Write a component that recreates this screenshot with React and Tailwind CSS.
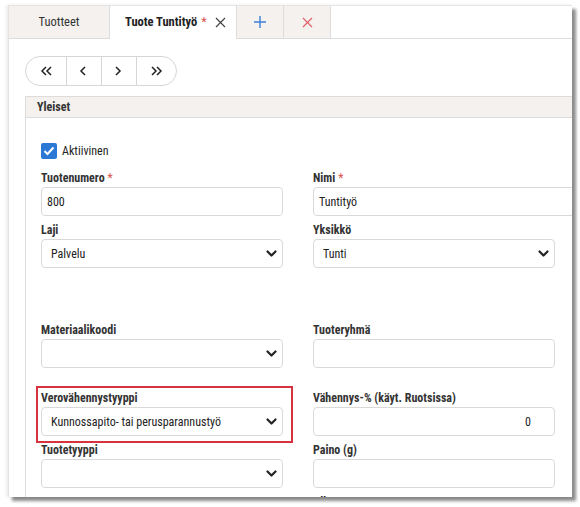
import React from "react";

const F = { fontFamily: '"Liberation Sans Narrow", "Roboto Condensed", Roboto, sans-serif' };

function Chevron() {
  return (
    <svg width="11" height="8" viewBox="0 0 11 8" className="shrink-0">
      <path d="M1.5 1.5 L5.5 5.5 L9.5 1.5" fill="none" stroke="#222" strokeWidth="2.2" strokeLinecap="round" strokeLinejoin="round" />
    </svg>
  );
}

function Label({ children, req }) {
  return (
    <div className="h-[17px] text-[12px] leading-[17px] font-bold text-[#333]">
      {children}
      {req && <span className="text-[#d9534f] ml-[3px] font-normal">*</span>}
    </div>
  );
}

function Input({ value, right, wide }) {
  return (
    <div className={`${wide ? "w-[272px]" : "w-[242px]"} h-[29px] border border-[#d9d9d9] rounded-[4px] bg-white flex items-center px-[5px] text-[12px] text-[#222] ${right ? "justify-end pr-[23px]" : ""}`}>
      {value}
    </div>
  );
}

function Select({ value }) {
  return (
    <div className="w-[242px] h-[29px] border border-[#d9d9d9] rounded-[4px] bg-white flex items-center justify-between pl-[9px] pr-[5px] text-[12px] text-[#222]">
      <span>{value}</span>
      <Chevron />
    </div>
  );
}

function Field({ label, req, children }) {
  return (
    <div className="flex flex-col">
      <Label req={req}>{label}</Label>
      {children}
    </div>
  );
}

export default function App() {
  return (
    <div className="w-[580px] h-[507px] bg-white pt-[5px] pl-[8px]" style={F}>
      <div className="w-[564px] h-[492px] overflow-hidden bg-white border-l border-t border-[#e4e4e4] shadow-[-2px_0_3px_rgba(0,0,0,0.08),4px_4px_3px_rgba(0,0,0,0.45)]">
        {/* Tab bar */}
        <div className="flex h-[33px]">
          <div className="w-[100px] bg-[#f4f1ee] border-b border-[#dcdcdc] flex items-center justify-center text-[12.5px] text-[#333]">
            Tuotteet
          </div>
          <div className="w-[128px] bg-white border-x border-[#dcdcdc] flex items-center pl-[15px] text-[12.5px] text-[#222]">
            <span className="font-bold">Tuote Tuntityö</span>
            <span className="text-[#d9534f] ml-[4px]">*</span>
            <svg width="11" height="11" viewBox="0 0 11 11" className="ml-[8px]">
              <path d="M1 1 L10 10 M10 1 L1 10" stroke="#444" strokeWidth="1.2" />
            </svg>
          </div>
          <div className="w-[47px] bg-[#f4f1ee] border-b border-r border-[#dcdcdc] flex items-center justify-center">
            <svg width="14" height="14" viewBox="0 0 14 14">
              <path d="M7 1 V13 M1 7 H13" stroke="#3d7fd6" strokeWidth="1.4" />
            </svg>
          </div>
          <div className="w-[47px] bg-[#f4f1ee] border-b border-r border-[#dcdcdc] flex items-center justify-center">
            <svg width="11" height="11" viewBox="0 0 11 11">
              <path d="M1 1 L10 10 M10 1 L1 10" stroke="#e0606a" strokeWidth="1.2" />
            </svg>
          </div>
          <div className="flex-1 border-b border-[#dcdcdc]" />
        </div>

        {/* Body */}
        <div className="pl-[16px]">
          <div className="mt-[17px] flex w-[152px] h-[30px] border border-[#d6d6d6] rounded-full text-[#222]">
            {[
              { w: "w-[41px]", d: "M8 3 L4 7 L8 11 M13 3 L9 7 L13 11" },
              { w: "w-[35px] border-l border-[#d6d6d6]", d: "M9 3 L5 7 L9 11" },
              { w: "w-[35px] border-l border-[#d6d6d6]", d: "M5 3 L9 7 L5 11" },
              { w: "w-[41px] border-l border-[#d6d6d6]", d: "M4 3 L8 7 L4 11 M9 3 L13 7 L9 11" },
            ].map((b, i) => (
              <div key={i} className={`${b.w} flex items-center justify-center`}>
                <svg width="16" height="14" viewBox="0 0 16 14">
                  <path d={b.d} fill="none" stroke="#222" strokeWidth="1.5" />
                </svg>
              </div>
            ))}
          </div>

          {/* Panel */}
          <div className="mt-[10px] border-l border-[#dcdcdc] h-[500px]">
            <div className="h-[22px] bg-[#f4f1ee] border-y border-[#dcdcdc] flex items-center pl-[11px] text-[12px] font-bold text-[#333]">
              Yleiset
            </div>
            <div className="pl-[15px]">
              <div className="mt-[24px] flex items-center h-[17px]">
                <div className="w-[16px] h-[16px] rounded-[2px] bg-[#2b79d4] flex items-center justify-center">
                  <svg width="12" height="10" viewBox="0 0 12 10">
                    <path d="M1.5 5 L4.5 8 L10.5 1.5" fill="none" stroke="#fff" strokeWidth="2" />
                  </svg>
                </div>
                <span className="ml-[5px] text-[12px] text-[#222]">Aktiivinen</span>
              </div>

              <div className="mt-[11px] grid grid-cols-[242px_272px] gap-x-[30px]">
                <Field label="Tuotenumero" req>
                  <Input value="800" />
                </Field>
                <Field label="Nimi" req>
                  <Input value="Tuntityö" wide />
                </Field>

                <div className="mt-[6px]">
                  <Field label="Laji">
                    <Select value="Palvelu" />
                  </Field>
                </div>
                <div className="mt-[6px]">
                  <Field label="Yksikkö">
                    <Select value="Tunti" />
                  </Field>
                </div>

                <div className="mt-[54px]">
                  <Field label="Materiaalikoodi">
                    <Select value="" />
                  </Field>
                </div>
                <div className="mt-[54px]">
                  <Field label="Tuoteryhmä">
                    <Input value="" />
                  </Field>
                </div>

                <div className="mt-[22px] relative">
                  <div className="absolute left-[-5px] top-[-4px] right-[-10px] bottom-[-7px] border-2 border-[#d7323f]" />
                  <Field label="Verovähennystyyppi">
                    <Select value="Kunnossapito- tai perusparannustyö" />
                  </Field>
                </div>
                <div className="mt-[22px]">
                  <Field label="Vähennys-% (käyt. Ruotsissa)">
                    <Input value="0" right />
                  </Field>
                </div>

                <div className="mt-[6px]">
                  <Field label="Tuotetyyppi">
                    <Select value="" />
                  </Field>
                </div>
                <div className="mt-[6px]">
                  <Field label="Paino (g)">
                    <Input value="" />
                  </Field>
                </div>

                <div className="mt-[6px]" />
                <div className="mt-[6px]">
                  <Label>Alkuperämaa</Label>
                </div>
              </div>
            </div>
          </div>
        </div>
      </div>
    </div>
  );
}
